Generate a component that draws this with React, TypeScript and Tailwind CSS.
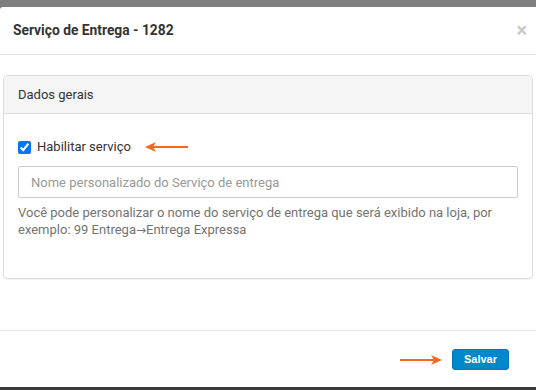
import React from 'react';

const font = { fontFamily: 'Roboto, "Liberation Sans", Arial, sans-serif' };

// orange annotation arrow, pointing left or right
const Arrow = ({ dir = 'left', width = 44 }: { dir?: 'left' | 'right'; width?: number }) => (
    <svg width={width} height="12" viewBox={`0 0 ${width} 12`} className="block">
        {dir === 'left' ? (
            <>
                <line x1="8" y1="6" x2={width} y2="6" stroke="#f26a21" strokeWidth="2" />
                <path d="M0 6 L11 1 L8 6 L11 11 Z" fill="#f26a21" />
            </>
        ) : (
            <>
                <line x1="0" y1="6" x2={width - 8} y2="6" stroke="#f26a21" strokeWidth="2" />
                <path d={`M${width} 6 L${width - 11} 1 L${width - 8} 6 L${width - 11} 11 Z`} fill="#f26a21" />
            </>
        )}
    </svg>
);

export default function App() {
    return (
        <div className="w-[536px] h-[390px] bg-[#7f7f7f] pt-[7px] flex flex-col overflow-hidden" style={font}>
            <div className="flex-1 bg-white rounded-tl-[3px] flex flex-col">
                {/* Header */}
                <div className="h-[48px] border-b border-[#e5e5e5] flex items-center justify-between pl-[13px] pr-[9px]">
                    <h4 className="text-[13.8px] font-bold text-[#333]">Serviço de Entrega - 1282</h4>
                    <span className="text-[20px] leading-none font-bold text-[#c8c8c8] -mt-[2px]">×</span>
                </div>

                {/* Body */}
                <div className="h-[275px] pt-[20px] px-[3px]">
                    <div className="border border-[#dddddd] rounded-[4px] shadow-[0_1px_1px_rgba(0,0,0,0.05)]">
                        <div className="h-[38px] bg-[#f5f5f5] border-b border-[#dddddd] rounded-t-[3px] flex items-center px-[14px]">
                            <span className="text-[13px] text-[#333]">Dados gerais</span>
                        </div>
                        <div className="px-[14px] pt-[26px] pb-[39px]">
                            <div className="flex items-center h-[14px]">
                                <input type="checkbox" defaultChecked className="w-[13px] h-[13px] m-0 accent-[#0075ff]" />
                                <label className="ml-[6px] text-[13px] text-[#333]">Habilitar serviço</label>
                                <div className="ml-[14px]">
                                    <Arrow dir="left" width={43} />
                                </div>
                            </div>
                            <input
                                type="text"
                                placeholder="Nome personalizado do Serviço de entrega"
                                className="mt-[12px] w-full h-[32px] border border-[#cccccc] rounded-[2px] px-[12px] text-[13px] text-[#555] placeholder:text-[#999] outline-none"
                            />
                            <p className="mt-[6px] text-[13px] leading-[17px] text-[#737373]">
                                Você pode personalizar o nome do serviço de entrega que será exibido na loja, por exemplo: 99 Entrega<span style={{ fontFamily: '"DejaVu Sans", sans-serif' }} className="text-[12px]">→</span>Entrega Expressa
                            </p>
                        </div>
                    </div>
                </div>

                {/* Footer */}
                <div className="flex-1 border-t border-[#e5e5e5] flex items-center justify-end pr-[27px] pt-[1px]">
                    <Arrow dir="right" width={42} />
                    <button
                        className="ml-[10px] h-[21px] px-[11px] bg-[#0088cc] border border-[#0077b3] rounded-[3px] text-white text-[11px] font-bold leading-none"
                        style={{ fontFamily: '"Liberation Sans", Arial, sans-serif' }}
                    >
                        Salvar
                    </button>
                </div>
            </div>
            <div className="h-[3px] bg-[#3a3a3a]" />
        </div>
    );
}
